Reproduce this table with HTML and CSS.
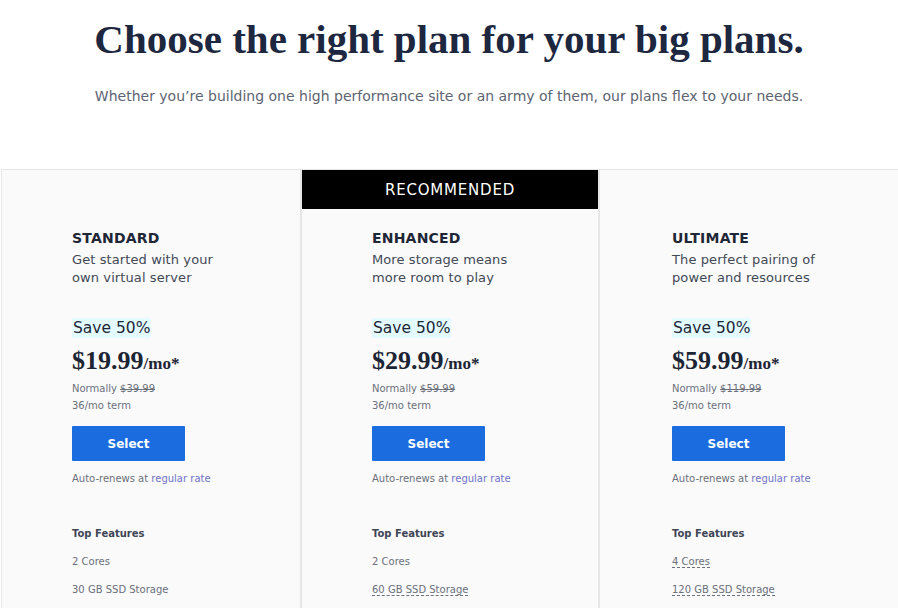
FILE: index.html
```html
<!DOCTYPE html>
<html>
<head>
<meta charset="utf-8">
<link rel="stylesheet" href="styles.css">
</head>
<body>
<header class="intro">
  <h1 class="title">Choose the right plan for your big plans.</h1>
  <p class="subtitle">Whether you’re building one high performance site or an army of them, our plans flex to your needs.</p>
</header>
<section class="plans">
  <div class="plan">
    <div class="plan-body">
      <h2 class="plan-name">STANDARD</h2>
      <p class="plan-desc">Get started with your<br>own virtual server</p>
      <span class="save">Save 50%</span>
      <div class="price">$19.99<span class="per">/mo*</span></div>
      <p class="small">Normally <s>$39.99</s></p>
      <p class="small">36/mo term</p>
      <button class="select">Select</button>
      <p class="small renew">Auto-renews at <a class="link">regular rate</a></p>
      <p class="feat-title">Top Features</p>
      <p class="feat"><span>2 Cores</span></p>
      <p class="feat"><span>30 GB SSD Storage</span></p>
    </div>
  </div>
  <div class="plan plan-rec">
    <div class="rec">RECOMMENDED</div>
    <div class="plan-body">
      <h2 class="plan-name">ENHANCED</h2>
      <p class="plan-desc">More storage means<br>more room to play</p>
      <span class="save">Save 50%</span>
      <div class="price">$29.99<span class="per">/mo*</span></div>
      <p class="small">Normally <s>$59.99</s></p>
      <p class="small">36/mo term</p>
      <button class="select">Select</button>
      <p class="small renew">Auto-renews at <a class="link">regular rate</a></p>
      <p class="feat-title">Top Features</p>
      <p class="feat"><span>2 Cores</span></p>
      <p class="feat"><span class="dash">60 GB SSD Storage</span></p>
    </div>
  </div>
  <div class="plan plan-last">
    <div class="plan-body">
      <h2 class="plan-name">ULTIMATE</h2>
      <p class="plan-desc">The perfect pairing of<br>power and resources</p>
      <span class="save">Save 50%</span>
      <div class="price">$59.99<span class="per">/mo*</span></div>
      <p class="small">Normally <s>$119.99</s></p>
      <p class="small">36/mo term</p>
      <button class="select">Select</button>
      <p class="small renew">Auto-renews at <a class="link">regular rate</a></p>
      <p class="feat-title">Top Features</p>
      <p class="feat"><span class="dash">4 Cores</span></p>
      <p class="feat"><span class="dash">120 GB SSD Storage</span></p>
    </div>
  </div>
</section>
</body>
</html>
```

FILE: styles.css
```css
* { box-sizing: border-box; }
html, body { margin: 0; padding: 0; background: #fff; overflow: hidden; }
body { font-family: "DejaVu Sans", "Noto Sans", sans-serif; color: #2a3142; }
.intro { text-align: center; padding-top: 18px; height: 169px; }
.title {
  margin: 0;
  font-family: "Liberation Serif", serif;
  font-weight: bold;
  font-size: 41px;
  line-height: 42px;
  color: #1d2740;
  letter-spacing: 0;
}
.subtitle {
  margin: 26px 0 0;
  font-size: 14px;
  line-height: 20px;
  color: #5d6472;
}
.plans {
  display: grid;
  grid-template-columns: 298px 300px 1fr;
  margin-left: 1px;
  border-top: 1px solid #e6e6e6;
  border-left: 1px solid #e6e6e6;
  height: 440px;
}
.plan { background: #fafafa; }
.plan-rec { border-left: 2px solid #e6e6e6; border-right: 2px solid #e6e6e6; }
.rec {
  background: #000;
  color: #fff;
  text-align: center;
  font-size: 15px;
  height: 39px;
  line-height: 40px;
  letter-spacing: 0.8px;
}
.plan-body { padding: 59px 0 0 70px; }
.plan-rec .plan-body { padding-top: 20px; }
.plan-last .plan-body { padding-left: 72px; }
.plan-name { margin: 0; font-size: 14px; line-height: 18px; font-weight: bold; color: #1f2636; letter-spacing: 0.2px; }
.plan-desc { margin: 4px 0 0; font-size: 13px; line-height: 18px; color: #414856; letter-spacing: 0.1px; }
.save {
  display: inline-block;
  margin-top: 31px;
  background: #e3fbff;
  font-size: 15.5px;
  line-height: 20px;
  padding: 0 1px;
  color: #1f2636;
}
.price {
  margin-top: 9px;
  font-family: "Liberation Serif", serif;
  font-weight: bold;
  font-size: 26px;
  line-height: 28px;
  color: #1d2433;
}
.per { font-size: 17px; }
.small { margin: 0; font-size: 10px; line-height: 17px; color: #6b707c; }
.price + .small { margin-top: 2px; }
.small s { color: #6b707c; }
.select {
  display: block;
  margin-top: 12px;
  width: 113px;
  height: 35px;
  border: 0;
  border-radius: 1px;
  background: #1b6ddf;
  color: #fff;
  font-family: inherit;
  font-weight: bold;
  font-size: 12px;
}
.renew { margin-top: 9px; }
.link { color: #6f72c6; }
.feat-title { margin: 38px 0 0; font-size: 10px; line-height: 17px; font-weight: bold; color: #3e4556; }
.feat { margin: 11px 0 0; font-size: 10px; line-height: 17px; color: #6b707c; }
.dash { border-bottom: 1px dashed #6b707c; }
```
